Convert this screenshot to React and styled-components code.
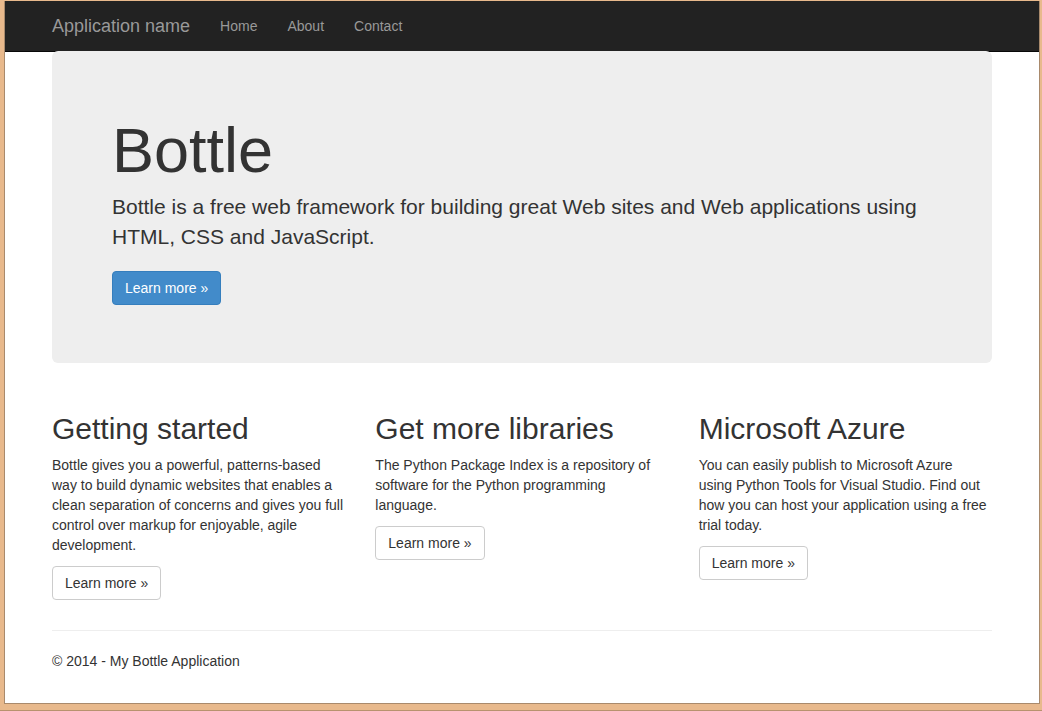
import React from 'react';
import styled, { createGlobalStyle } from 'styled-components';

const GlobalStyle = createGlobalStyle`
  html, body {
    margin: 0;
    padding: 0;
    background: #e8b98c;
  }
  body {
    font-family: "Liberation Sans", Arial, Helvetica, sans-serif;
    font-size: 14px;
    line-height: 20px;
    color: #333;
  }
  * {
    box-sizing: border-box;
  }
`;

const Frame = styled.div`
  height: 711px;
  padding: 1px 2px 0 4px;
  border-bottom: 1px solid #b8926e;
  background: #e8b98c;
`;

const Window = styled.div`
  height: 703px;
  background: #fff;
  border: 1px solid #a98a6c;
  border-top: none;
  overflow: hidden;
`;

const Navbar = styled.div`
  height: 51px;
  background: #222;
  border-bottom: 1px solid #080808;
`;

const Container = styled.div`
  width: 970px;
  margin: 0 auto;
  padding: 0 15px;
`;

const NavInner = styled(Container)`
  display: flex;
  align-items: center;
  height: 50px;
`;

const Brand = styled.a`
  font-size: 18px;
  line-height: 20px;
  color: #999;
  padding: 15px 15px 15px 0;
  text-decoration: none;
`;

const NavLink = styled.a`
  font-size: 14px;
  line-height: 20px;
  color: #999;
  padding: 15px;
  text-decoration: none;
`;

const Jumbotron = styled.div`
  margin-top: -1px;
  background: #eee;
  border-radius: 6px;
  padding: 48px 60px 58px;
  margin-bottom: 29px;
`;

const BigTitle = styled.h1`
  font-size: 63px;
  line-height: 1;
  font-weight: 500;
  margin: 20px 0 10px;
  color: #333;
`;

const Lead = styled.p`
  font-size: 21px;
  line-height: 30px;
  margin: 0 0 15px;
`;

const ButtonRow = styled.div`
  display: flex;
  padding-top: ${({ $offset }) => $offset || 0}px;
  margin-bottom: ${({ $gap }) => $gap || 0}px;
`;

const Button = styled.a`
  display: inline-block;
  font-size: 14px;
  line-height: 20px;
  padding: 6px 12px;
  border-radius: 4px;
  border: 1px solid ${({ $primary }) => ($primary ? '#357ebd' : '#ccc')};
  background: ${({ $primary }) => ($primary ? '#428bca' : '#fff')};
  color: ${({ $primary }) => ($primary ? '#fff' : '#333')};
  text-decoration: none;
  cursor: pointer;
`;

const Row = styled.div`
  display: grid;
  grid-template-columns: repeat(3, 1fr);
  margin: 0 -15px;
`;

const Column = styled.div`
  padding: 0 15px;
`;

const ColumnTitle = styled.h2`
  font-size: 30px;
  line-height: 33px;
  font-weight: 500;
  margin: 20px 0 10px;
  color: #333;
`;

const Text = styled.p`
  margin: 0 0 10px;
  max-width: ${({ $max }) => ($max ? `${$max}px` : 'none')};
`;

const Rule = styled.hr`
  border: 0;
  border-top: 1px solid #eee;
  margin: 20px 0;
`;

const Footer = styled.footer`
  p {
    margin: 0;
  }
`;

const columns = [
  {
    title: 'Getting started',
    text: 'Bottle gives you a powerful, patterns-based way to build dynamic websites that enables a clean separation of concerns and gives you full control over markup for enjoyable, agile development.',
  },
  {
    title: 'Get more libraries',
    text: 'The Python Package Index is a repository of software for the Python programming language.',
  },
  {
    title: 'Microsoft Azure',
    text: 'You can easily publish to Microsoft Azure using Python Tools for Visual Studio. Find out how you can host your application using a free trial today.',
    max: 290,
  },
];

const App = () => {
  return (
    <>
      <GlobalStyle />
      <Frame>
        <Window>
          <Navbar>
            <NavInner>
              <Brand href="#">Application name</Brand>
              <NavLink href="#">Home</NavLink>
              <NavLink href="#">About</NavLink>
              <NavLink href="#">Contact</NavLink>
            </NavInner>
          </Navbar>
          <Container>
            <Jumbotron>
              <BigTitle>Bottle</BigTitle>
              <Lead>
                Bottle is a free web framework for building great Web sites and Web applications using HTML, CSS and JavaScript.
              </Lead>
              <ButtonRow $offset={4}>
                <Button $primary>Learn more &raquo;</Button>
              </ButtonRow>
            </Jumbotron>
            <Row>
              {columns.map(col => (
                <Column key={col.title}>
                  <ColumnTitle>{col.title}</ColumnTitle>
                  <Text $max={col.max}>{col.text}</Text>
                  <ButtonRow $offset={1} $gap={10}>
                    <Button>Learn more &raquo;</Button>
                  </ButtonRow>
                </Column>
              ))}
            </Row>
            <Rule />
            <Footer>
              <p>&copy; 2014 - My Bottle Application</p>
            </Footer>
          </Container>
        </Window>
      </Frame>
    </>
  );
};

export default App;
